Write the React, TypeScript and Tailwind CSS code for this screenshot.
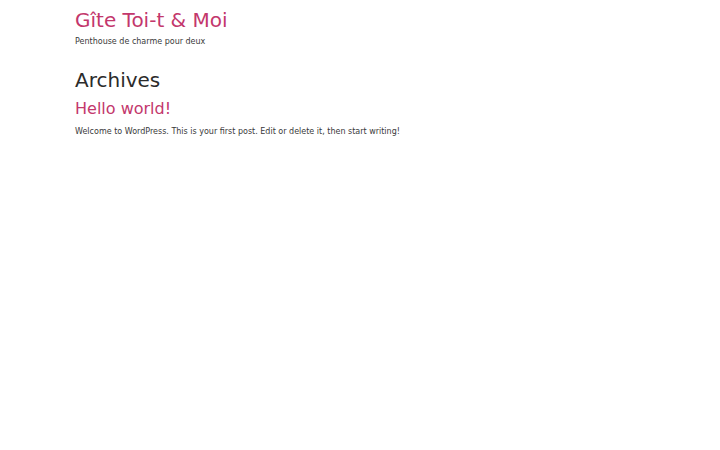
export default function App() {
  return (
    <div className="min-h-[450px] bg-white pl-[75px] pt-[6px] text-[#333333]" style={{ fontFamily: '"DejaVu Sans", sans-serif' }}>
      <header>
        <div className="text-[20px] leading-[28px] text-[#c3376c]">Gîte Toi-t &amp; Moi</div>
        <div className="mt-[2px] text-[8px] leading-[12px] text-[#3a3a3a]">Penthouse de charme pour deux</div>
      </header>
      <main className="mt-[18px]">
        <h1 className="text-[20px] leading-[28px] text-[#2b2b2b]">Archives</h1>
        <h2 className="mt-[4px] text-[16px] leading-[22px] text-[#c3376c]">Hello world!</h2>
        <p className="mt-[6px] text-[8px] leading-[12px] text-[#3a3a3a]">Welcome to WordPress. This is your first post. Edit or delete it, then start writing!</p>
      </main>
    </div>
  );
}
